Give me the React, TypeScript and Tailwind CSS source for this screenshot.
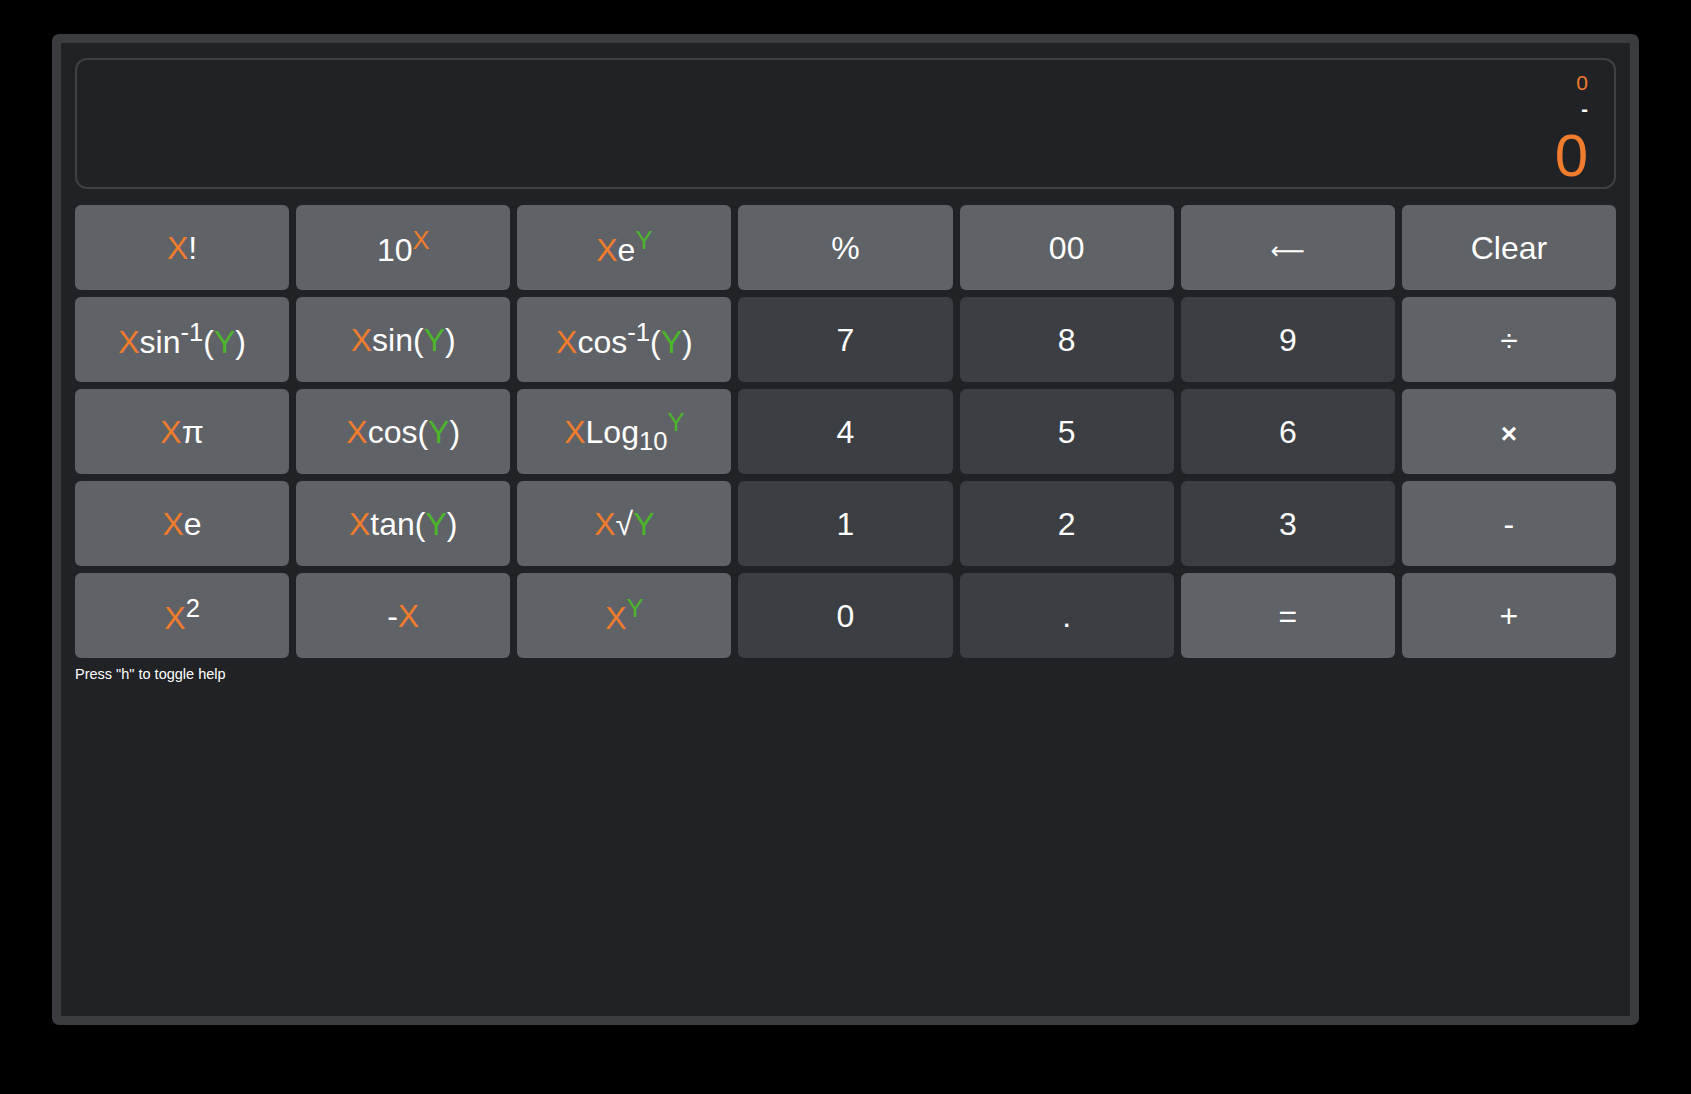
import React from "react";

const O = ({ children }: { children: React.ReactNode }) => (
  <span className="text-[#f07c2e]">{children}</span>
);
const G = ({ children }: { children: React.ReactNode }) => (
  <span className="text-[#4cb52c]">{children}</span>
);
const Sup = ({ children }: { children: React.ReactNode }) => (
  <sup className="static align-super text-[0.8em] leading-normal">{children}</sup>
);
const Sub = ({ children }: { children: React.ReactNode }) => (
  <sub className="static align-sub text-[0.8em] leading-normal">{children}</sub>
);

type B = { label: React.ReactNode; dark?: boolean };

const buttons: B[] = [
  { label: <><O>X</O>!</> },
  { label: <>10<Sup><O>X</O></Sup></> },
  { label: <><O>X</O>e<Sup><G>Y</G></Sup></> },
  { label: "%" },
  { label: "00" },
  {
    label: (
      <span className="inline-block text-[24px] leading-none" style={{ fontFamily: '"DejaVu Sans", sans-serif' }}>
        ⟵
      </span>
    ),
  },
  { label: "Clear" },

  { label: <><O>X</O>sin<Sup>-1</Sup>(<G>Y</G>)</> },
  { label: <><O>X</O>sin(<G>Y</G>)</> },
  { label: <><O>X</O>cos<Sup>-1</Sup>(<G>Y</G>)</> },
  { label: "7", dark: true },
  { label: "8", dark: true },
  { label: "9", dark: true },
  { label: "÷" },

  { label: <><O>X</O>π</> },
  { label: <><O>X</O>cos(<G>Y</G>)</> },
  { label: <><O>X</O>Log<Sub>10</Sub><Sup><G>Y</G></Sup></> },
  { label: "4", dark: true },
  { label: "5", dark: true },
  { label: "6", dark: true },
  { label: <span className="font-bold text-[28px]">×</span> },

  { label: <><O>X</O>e</> },
  { label: <><O>X</O>tan(<G>Y</G>)</> },
  { label: <><O>X</O>√<G>Y</G></> },
  { label: "1", dark: true },
  { label: "2", dark: true },
  { label: "3", dark: true },
  { label: "-" },

  { label: <><O>X</O><Sup>2</Sup></> },
  { label: <>-<O>X</O></> },
  { label: <><O>X</O><Sup><G>Y</G></Sup></> },
  { label: "0", dark: true },
  { label: ".", dark: true },
  { label: "=" },
  { label: "+" },
];

export default function App() {
  return (
    <div
      className="w-full h-[1094px] bg-black pl-[52px] pt-[34px]"
      style={{ fontFamily: '"Liberation Sans", Arial, sans-serif' }}
    >
      <div className="w-[1587px] h-[991px] border-[9px] border-[#3b3c3f] rounded-[7px] bg-[#212226] px-[14px] pt-[15px]">
        <div className="h-[131px] border-2 border-[#404145] rounded-[12px] flex flex-col items-end pr-[26px] pt-[12px]">
          <div className="text-[21px] leading-[22px] text-[#f07c2e]">0</div>
          <div className="text-[20px] leading-[20px] text-white font-bold mt-[5px]">-</div>
          <div className="text-[60px] leading-[60px] text-[#f07c2e] mt-[7px]">0</div>
        </div>
        <div className="mt-[16px] grid grid-cols-7 gap-x-[7px] gap-y-[7px]">
          {buttons.map((b, i) => (
            <div
              key={i}
              className={
                "h-[85px] rounded-[6px] flex items-center justify-center text-white text-[32px] " +
                (b.dark ? "bg-[#3b3e42]" : "bg-[#5f6266]")
              }
            >
              <span className="leading-normal">{b.label}</span>
            </div>
          ))}
        </div>
        <div className="mt-[8px] text-[14.5px] leading-[17px] text-white">
          Press "h" to toggle help
        </div>
      </div>
    </div>
  );
}
